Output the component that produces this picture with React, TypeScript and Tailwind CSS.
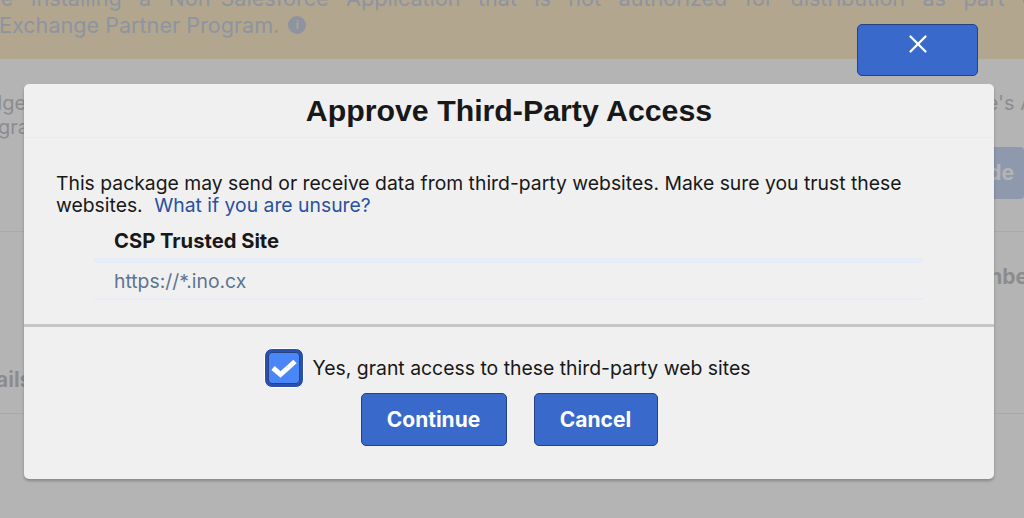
import { X } from 'lucide-react';

const App = () => {
  return (
    <div className="relative h-[518px] w-[1024px] overflow-hidden bg-[#b4b4b4] font-['Inter',sans-serif]">
      {/* Page behind the dimmed overlay */}
      <div className="h-[59px] overflow-hidden bg-[#b3a68f] text-[21.6px] leading-[30px] text-[#8d94a0]">
        <div className="-ml-[7px] -mt-[17px] flex w-[1050px] justify-between whitespace-nowrap">
          <span>re</span>
          <span>Installing</span>
          <span>a</span>
          <span>Non-Salesforce</span>
          <span>Application</span>
          <span>that</span>
          <span>is</span>
          <span>not</span>
          <span>authorized</span>
          <span>for</span>
          <span>distribution</span>
          <span>as</span>
          <span>part</span>
          <span>of</span>
        </div>
        <div className="-mt-[3px] -ml-px flex items-center gap-[9px]">
          <span>Exchange Partner Program.</span>
          <span className="flex h-[18px] w-[18px] items-center justify-center rounded-full bg-[#8d94a0] text-[11px] font-bold text-[#b3a68f]">
            i
          </span>
        </div>
      </div>

      <div className="flex justify-between pt-[32px] text-[20px] leading-[24px] text-[#8c8c8f]">
        <div className="flex flex-col">
          <span className="-ml-[10px]">dge</span>
          <span className="-ml-[2px]">gra</span>
        </div>
        <span className="-mr-[10px]">e's A</span>
      </div>

      <div className="mt-[8px] flex justify-end">
        <div className="flex h-[52px] w-[60px] items-center justify-end rounded-[4px] bg-[#8f99ad] pr-[10px] text-[21px] font-bold text-[#b4b4b4]">
          de
        </div>
      </div>
      <div className="mt-[32px] border-t border-[#a9a9a9]" />
      <div className="mt-[33px] flex justify-end text-[21px] font-bold leading-[24px] text-[#8c8c8f]">
        <span className="-mr-[4px]">nbe</span>
      </div>
      <div className="mt-[79px] text-[21px] font-bold leading-[24px] text-[#8c8c8f]">
        <span className="-ml-[4px]">ails</span>
      </div>
      <div className="mt-[21px] border-t border-[#a9a9a9]" />

      {/* Close button */}
      <button className="absolute left-[857px] top-[24px] flex h-[52px] w-[121px] justify-center rounded-[5px] border border-[#27437f] bg-[#3869cb] pt-[4px] text-white">
        <X size={30} strokeWidth={1.8} />
      </button>

      {/* Modal */}
      <div className="absolute left-[24px] top-[84px] flex h-[395px] w-[970px] flex-col rounded-[5px] bg-[#f0f0f0] shadow-[0_2px_3px_rgba(0,0,0,0.25)]">
        <div className="flex h-[54px] items-center justify-center border-b border-[#e6ebf2] pt-[2px]">
          <h1 className="font-['Liberation_Sans',sans-serif] text-[30.3px] font-bold leading-none text-[#181818]">
            Approve Third-Party Access
          </h1>
        </div>

        <div className="h-[186px] pl-[32px] pt-[34px] text-[19.35px] leading-[22px] text-[#181818]">
          <p className="w-[870px]">
            This package may send or receive data from third-party websites. Make sure you trust these websites.{' '}
            <a className="ml-[6px] text-[#2a50a0]">What if you are unsure?</a>
          </p>
          <div className="ml-[38px] mt-[14px] w-[829px]">
            <div className="h-[33px] border-b-[5px] border-[#e6edf6] pl-[20px] text-[20.2px] font-bold leading-[22px]">
              CSP Trusted Site
            </div>
            <div className="flex h-[37px] items-center border-b-2 border-[#e8edf5] pl-[20px] text-[#5d7492]">
              https://*.ino.cx
            </div>
          </div>
        </div>

        <div className="flex flex-1 flex-col items-center border-t-[3px] border-[#c6c6c6] pt-[21px]">
          <label className="-ml-[4px] flex items-center gap-[9px] text-[19.4px] leading-[22px] text-[#181818]">
            <span className="flex h-[40px] w-[40px] items-center justify-center rounded-[8px] border border-white bg-[#2b50ab] p-[3px]">
              <span className="flex h-full w-full items-center justify-center rounded-[4px] border border-[#27437f] bg-[#4a86f7]">
                <svg width="26" height="20" viewBox="0 0 26 20" fill="none">
                  <path d="M2 10 L9.5 16.5 L24 3.5" stroke="white" strokeWidth="5" />
                </svg>
              </span>
            </span>
            Yes, grant access to these third-party web sites
          </label>
          <div className="mt-[5px] flex gap-[27px]">
            <button className="h-[53px] w-[146px] rounded-[5px] border border-[#27437f] bg-[#3869cb] text-[21px] font-bold text-white">
              Continue
            </button>
            <button className="h-[53px] w-[124px] rounded-[5px] border border-[#27437f] bg-[#3869cb] text-[21px] font-bold text-white">
              Cancel
            </button>
          </div>
        </div>
      </div>
    </div>
  );
};

export default App;
